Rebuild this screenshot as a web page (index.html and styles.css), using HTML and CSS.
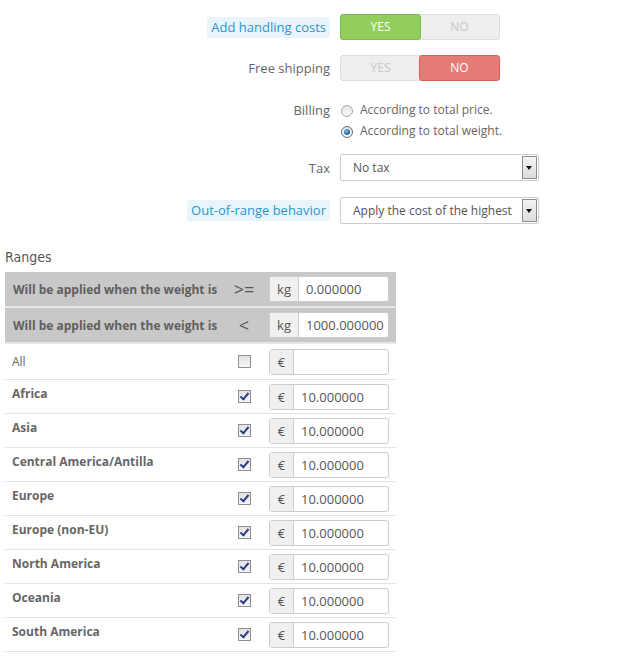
FILE: index.html
```html
<!DOCTYPE html>
<html>
<head>
<title>Carrier ranges</title>
<meta charset="UTF-8">
<link rel="stylesheet" href="styles.css">
</head>
<body>
<div id="wrapper">

	<div class="form_row row_handling">
		<div class="label_col"><span class="tip">Add handling costs</span></div>
		<div class="switch">
			<span class="on yes">YES</span>
			<span>NO</span>
		</div>
	</div>

	<div class="form_row row_free">
		<div class="label_col">Free shipping</div>
		<div class="switch">
			<span>YES</span>
			<span class="on no">NO</span>
		</div>
	</div>

	<div class="form_row row_billing">
		<div class="label_col">Billing</div>
		<div class="radios">
			<label class="radio"><span class="dot"></span>According to total price.</label>
			<label class="radio"><span class="dot checked"></span>According to total weight.</label>
		</div>
	</div>

	<div class="form_row row_tax">
		<div class="label_col">Tax</div>
		<div class="select"><span>No tax</span><span class="arrow"></span></div>
	</div>

	<div class="form_row row_range">
		<div class="label_col"><span class="tip">Out-of-range behavior</span></div>
		<div class="select"><span>Apply the cost of the highest</span><span class="arrow"></span></div>
	</div>

	<h3 class="ranges_title">Ranges</h3>

	<div class="ranges">
		<div class="rrow head">
			<div class="rlabel">Will be applied when the weight is</div>
			<div class="rmid sign">&gt;=</div>
			<div class="group"><span class="addon">kg</span><span class="field">0.000000</span></div>
		</div>
		<div class="rrow head">
			<div class="rlabel">Will be applied when the weight is</div>
			<div class="rmid sign">&lt;</div>
			<div class="group"><span class="addon">kg</span><span class="field">1000.000000</span></div>
		</div>
		<div class="rrow all">
			<div class="rlabel">All</div>
			<div class="rmid"><span class="check"></span></div>
			<div class="group"><span class="addon cur">€</span><span class="field"></span></div>
		</div>
		<div class="rrow">
			<div class="rlabel">Africa</div>
			<div class="rmid"><span class="check on"></span></div>
			<div class="group"><span class="addon cur">€</span><span class="field">10.000000</span></div>
		</div>
		<div class="rrow">
			<div class="rlabel">Asia</div>
			<div class="rmid"><span class="check on"></span></div>
			<div class="group"><span class="addon cur">€</span><span class="field">10.000000</span></div>
		</div>
		<div class="rrow">
			<div class="rlabel">Central America/Antilla</div>
			<div class="rmid"><span class="check on"></span></div>
			<div class="group"><span class="addon cur">€</span><span class="field">10.000000</span></div>
		</div>
		<div class="rrow">
			<div class="rlabel">Europe</div>
			<div class="rmid"><span class="check on"></span></div>
			<div class="group"><span class="addon cur">€</span><span class="field">10.000000</span></div>
		</div>
		<div class="rrow">
			<div class="rlabel">Europe (non-EU)</div>
			<div class="rmid"><span class="check on"></span></div>
			<div class="group"><span class="addon cur">€</span><span class="field">10.000000</span></div>
		</div>
		<div class="rrow">
			<div class="rlabel">North America</div>
			<div class="rmid"><span class="check on"></span></div>
			<div class="group"><span class="addon cur">€</span><span class="field">10.000000</span></div>
		</div>
		<div class="rrow">
			<div class="rlabel">Oceania</div>
			<div class="rmid"><span class="check on"></span></div>
			<div class="group"><span class="addon cur">€</span><span class="field">10.000000</span></div>
		</div>
		<div class="rrow">
			<div class="rlabel">South America</div>
			<div class="rmid"><span class="check on"></span></div>
			<div class="group"><span class="addon cur">€</span><span class="field">10.000000</span></div>
		</div>
	</div>

</div>
</body>
</html>
```

FILE: styles.css
```css
html {
	background-color: #fff;
}

body {
	margin: 0;
	font-family: "Open Sans", "Liberation Sans", sans-serif;
	font-size: 13px;
	color: #666;
}

#wrapper {
	width: 641px;
	padding-top: 14px;
}

/**************************
/******FORM ROWS
/**/
.form_row {
	display: grid;
	grid-template-columns: 330px 200px;
	column-gap: 10px;
	align-items: center;
}

.row_free {
	margin-top: 15px;
}

.row_billing {
	margin-top: 19px;
	align-items: start;
}

.row_tax {
	margin-top: 13px;
}

.row_range {
	margin-top: 16px;
}

.label_col {
	text-align: right;
	line-height: 20px;
}

.tip {
	display: inline-block;
	background-color: #e9f5fb;
	color: #2b95cf;
	padding: 0 4px;
	border-radius: 2px;
	line-height: 21px;
}

.switch {
	display: flex;
	width: 160px;
	height: 26px;
	box-sizing: border-box;
	background-color: #eee;
	border: 1px solid #ddd;
	border-radius: 3px;
	font-size: 12px;
}

.switch span {
	flex: 1;
	text-align: center;
	line-height: 24px;
	color: #c8c8c8;
}

.switch .on {
	color: #fff;
	margin: -1px;
	border-radius: 3px;
}

.switch .yes {
	background-color: #92ce5c;
	border: 1px solid #7fbd4a;
}

.switch .no {
	background-color: #e47b75;
	border: 1px solid #d85f58;
}

.radios {
	display: flex;
	flex-direction: column;
	gap: 1px;
	font-size: 12px;
}

.radio {
	display: flex;
	align-items: center;
	line-height: 20px;
}

.dot {
	width: 10px;
	height: 10px;
	border-radius: 50%;
	border: 1px solid #a8a8a8;
	background: linear-gradient(#e6e6e6, #fafafa);
	margin: 2px 7px 0 1px;
	position: relative;
}

.dot.checked {
	border-color: #5f6a78;
}

.dot.checked:after {
	content: "";
	position: absolute;
	left: 2px;
	top: 2px;
	width: 6px;
	height: 6px;
	border-radius: 50%;
	background: radial-gradient(circle at 40% 35%, #7fc4ee, #1d5e98 70%);
}

.select {
	display: flex;
	align-items: center;
	justify-content: space-between;
	width: 199px;
	height: 27px;
	box-sizing: border-box;
	border: 1px solid #ccc;
	border-radius: 2px;
	padding-left: 12px;
	font-size: 12px;
	white-space: nowrap;
	color: #555;
	background-color: #fff;
}

.select .arrow {
	width: 15px;
	height: 23px;
	margin-right: 1px;
	box-sizing: border-box;
	border: 1px solid #8c8c8c;
	background: linear-gradient(#f4f4f4, #dcdcdc);
	position: relative;
}

.select .arrow:after {
	content: "";
	position: absolute;
	left: 3px;
	top: 9px;
	border-left: 3.5px solid transparent;
	border-right: 3.5px solid transparent;
	border-top: 4px solid #111;
}

/**************************
/******RANGES
/**/
.ranges_title {
	font-family: "Liberation Sans Narrow", "DejaVu Sans Condensed", "DejaVu Sans", sans-serif;
	font-stretch: condensed;
	font-weight: normal;
	font-size: 14px;
	color: #555;
	margin: 24px 0 6px 5px;
	line-height: 18px;
}

.ranges {
	width: 391px;
	margin-left: 5px;
}

.rrow {
	display: flex;
	align-items: center;
	height: 33px;
	border-bottom: 1px solid #e4e4e4;
}

.rrow.head {
	background-color: #c8c8c8;
	border-bottom: 2px solid #e6e6e6;
	height: 34px;
}

.rrow.all {
	height: 35px;
}

.rlabel {
	width: 225px;
	box-sizing: border-box;
	padding-left: 7px;
	font-size: 12px;
	font-weight: bold;
	color: #666;
	margin-top: -6px;
}

.head .rlabel {
	padding-left: 8px;
	margin-top: 0;
	color: #5f5f5f;
}

.all .rlabel {
	font-weight: normal;
	margin-top: 0;
}

.rmid {
	width: 28px;
	display: flex;
	justify-content: center;
}

.sign {
	font-size: 18px;
	color: #555;
}

.group {
	display: flex;
	height: 26px;
	margin-left: 11px;
	box-sizing: border-box;
	border: 1px solid #ccc;
	border-radius: 3px;
	background-color: #fff;
	width: 120px;
}

.addon {
	width: 29px;
	box-sizing: border-box;
	background-color: #f0f0f0;
	border-right: 1px solid #ccc;
	text-align: center;
	line-height: 24px;
	color: #555;
}

.addon.cur {
	width: 24px;
}

.field {
	flex: 1;
	padding-left: 7px;
	line-height: 24px;
	color: #555;
}

.check {
	width: 11px;
	height: 11px;
	border: 1px solid #8f8f8f;
	background: linear-gradient(#e2e2e2, #f7f7f7);
	position: relative;
}

.check.on:after {
	content: "";
	position: absolute;
	left: 3px;
	top: 0px;
	width: 3px;
	height: 7px;
	border-right: 2px solid #2c3f8c;
	border-bottom: 2px solid #2c3f8c;
	transform: rotate(40deg);
}
```
